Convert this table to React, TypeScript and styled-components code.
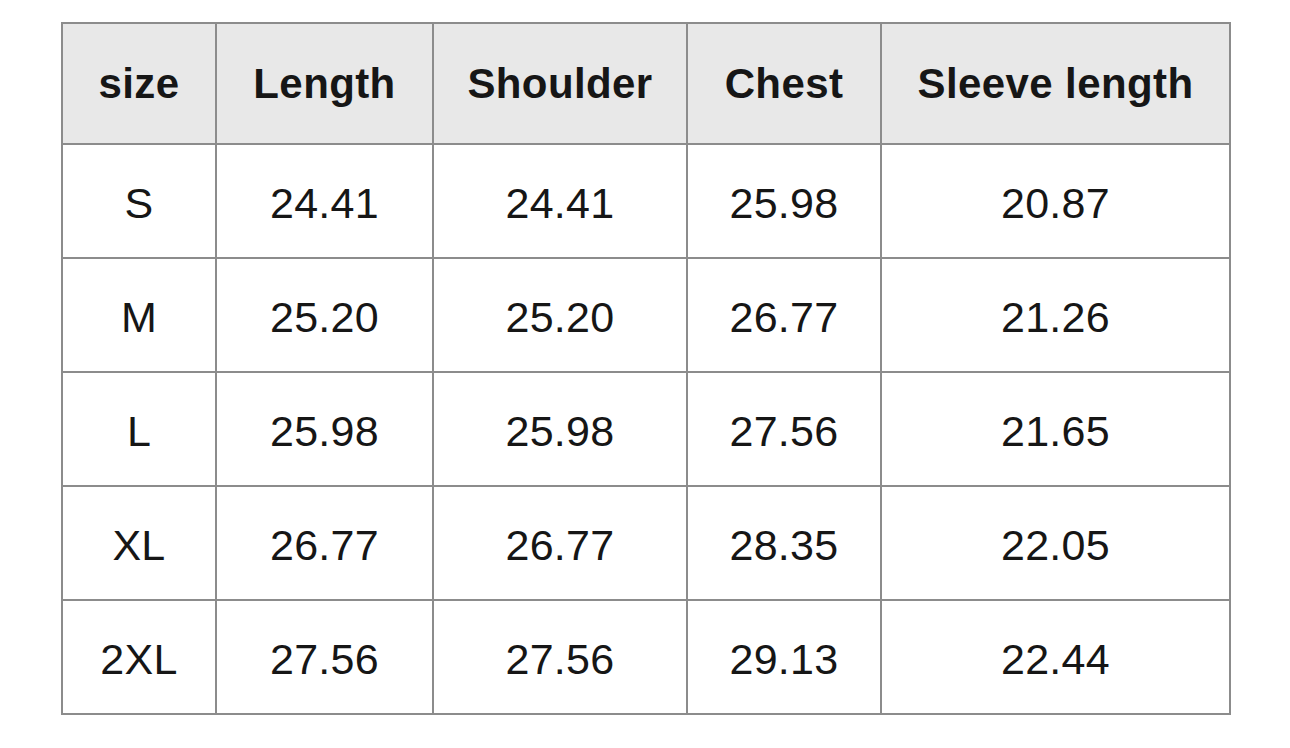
import React from "react";
import styled, { createGlobalStyle } from "styled-components";

const GlobalStyle = createGlobalStyle`
  body {
    margin: 0;
    background: #ffffff;
    font-family: "Liberation Sans", Arial, sans-serif;
  }
`;

const Page = styled.div`
  padding: 22px 61px;
`;

const Table = styled.table`
  border-collapse: collapse;
  table-layout: fixed;
  width: 1168px;
  color: #161616;
`;

const HeadCell = styled.th`
  height: 119px;
  padding: 0;
  border: 2px solid #8c8c8c;
  background: #e8e8e8;
  font-size: 42px;
  font-weight: 700;
  letter-spacing: 0.4px;
  text-align: center;
  vertical-align: middle;
`;

const Cell = styled.td`
  height: 108px;
  padding: 4px 0 0;
  border: 2px solid #8c8c8c;
  font-size: 43px;
  font-weight: 400;
  letter-spacing: 0.3px;
  text-align: center;
  vertical-align: middle;
`;

const columns = [
  { title: "size", width: 154 },
  { title: "Length", width: 217 },
  { title: "Shoulder", width: 254 },
  { title: "Chest", width: 194 },
  { title: "Sleeve length", width: 349 },
];

const rows = [
  ["S", "24.41", "24.41", "25.98", "20.87"],
  ["M", "25.20", "25.20", "26.77", "21.26"],
  ["L", "25.98", "25.98", "27.56", "21.65"],
  ["XL", "26.77", "26.77", "28.35", "22.05"],
  ["2XL", "27.56", "27.56", "29.13", "22.44"],
];

export default function App() {
  return (
    <>
      <GlobalStyle />
      <Page>
        <Table>
          <colgroup>
            {columns.map((c) => (
              <col key={c.title} style={{ width: c.width }} />
            ))}
          </colgroup>
          <thead>
            <tr>
              {columns.map((c) => (
                <HeadCell key={c.title}>{c.title}</HeadCell>
              ))}
            </tr>
          </thead>
          <tbody>
            {rows.map((r) => (
              <tr key={r[0]}>
                {r.map((v, i) => (
                  <Cell key={i}>{v}</Cell>
                ))}
              </tr>
            ))}
          </tbody>
        </Table>
      </Page>
    </>
  );
}
